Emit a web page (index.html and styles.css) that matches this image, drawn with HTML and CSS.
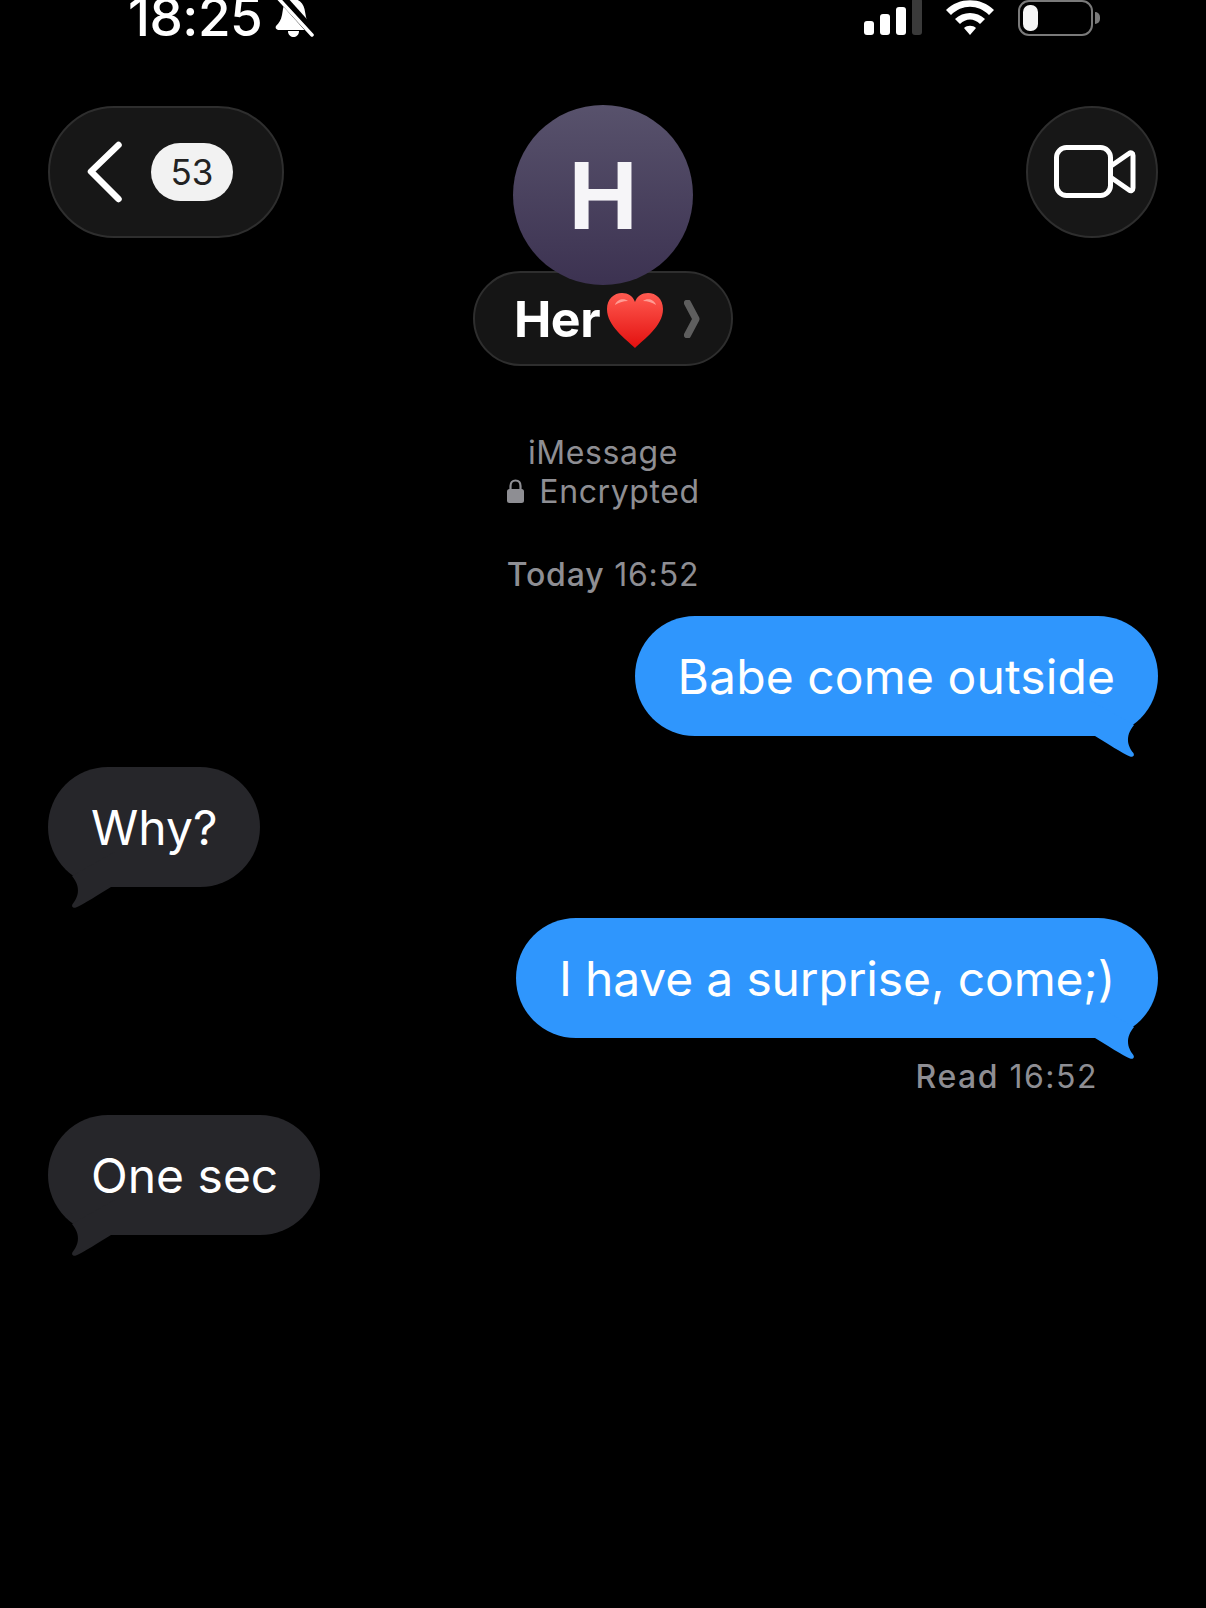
FILE: index.html
```html
<!DOCTYPE html>
<html lang="en">
<head>
    <meta charset="UTF-8">
    <meta name="viewport" content="width=device-width, initial-scale=1.0">
    <title>Messages</title>
    <link rel="stylesheet" href="styles.css">
</head>
<body>
    <svg class="defs" width="0" height="0">
        <symbol id="tail" viewBox="0 0 70 60">
            <path d="M0 36H5C18 44 32 53 40 56.500C43.500 57.500 45 55 43 52.500C38.500 47 34 37 44 25L0 0Z"/>
        </symbol>
    </svg>

    <div class="status-bar">
        <div class="status-left">
            <span class="time">18:25</span>
            <svg class="bell" width="40" height="40" viewBox="0 0 40 40">
                <path d="M19 1C25 1 29 5 30.500 11L32 19C33 24 36 26 38 29V32H6C2 32 1 30 2 28C5 25 7 22 8 17L9 11C10 5 13 1 19 1Z" fill="#fff"/>
                <path d="M14 33H25C25 37 22 39 19.500 39C17 39 14 37 14 33Z" fill="#fff"/>
                <path d="M6 -2L42 38" stroke="#000" stroke-width="9"/>
                <path d="M4 0L38 37" stroke="#fff" stroke-width="3.500" stroke-linecap="round"/>
            </svg>
        </div>
        <div class="status-right">
            <div class="signal">
                <span class="bar bar-1"></span>
                <span class="bar bar-2"></span>
                <span class="bar bar-3"></span>
                <span class="bar bar-4"></span>
            </div>
            <svg class="wifi" width="50" height="36" viewBox="0 0 50 36">
                <path d="M1 10C14 -3 36 -3 49 10L44 15C33 4 17 4 6 15Z" fill="#fff"/>
                <path d="M10 19C18 11 32 11 40 19L35 24C29 18 21 18 15 24Z" fill="#fff"/>
                <path d="M19 28C22 25 28 25 31 28L25 35Z" fill="#fff"/>
            </svg>
            <div class="battery">
                <div class="battery-body"><span class="battery-level"></span></div>
                <span class="battery-nub"></span>
            </div>
        </div>
    </div>

    <div class="header">
        <div class="glass-btn back-btn">
            <svg width="36" height="62" viewBox="0 0 36 62">
                <path d="M31.500 4L4 30.500L31.500 58" fill="none" stroke="#fff" stroke-width="6.500" stroke-linecap="round" stroke-linejoin="round"/>
            </svg>
            <span class="badge">53</span>
        </div>

        <div class="contact">
            <div class="avatar">H</div>
            <div class="name-pill">
                <span class="name">Her</span>
                <svg class="heart" width="58" height="58" viewBox="0 0 58 58">
                    <defs>
                        <linearGradient id="heartFill" x1="0" y1="0" x2="0" y2="1">
                            <stop offset="0" stop-color="#ff5a50"/>
                            <stop offset="1" stop-color="#e3100f"/>
                        </linearGradient>
                    </defs>
                    <path d="M29 56C20 47 1 34 1 17C1 7 8 1 16 1C22 1 27 4 29 10C31 4 36 1 42 1C50 1 57 7 57 17C57 34 38 47 29 56Z" fill="url(#heartFill)"/>
                    <path d="M9 13C11 7 18 6 22 9C17 9 12 11 9 13Z" fill="#ff9c94"/>
                    <path d="M37 9C41 6 48 7 50 13C47 11 42 9 37 9Z" fill="#ff9c94"/>
                </svg>
                <svg class="chevron" width="16" height="38" viewBox="0 0 16 38">
                    <path d="M3.500 3L12 19L3.500 35" fill="none" stroke="#5e5e5e" stroke-width="7" stroke-linecap="round" stroke-linejoin="round"/>
                </svg>
            </div>
        </div>

        <div class="glass-btn video-btn">
            <svg width="82" height="54" viewBox="0 0 82 54">
                <rect x="2.500" y="2.500" width="54" height="48" rx="10" fill="none" stroke="#fff" stroke-width="5"/>
                <path d="M57 21L75 8.500C77 7 79 8 79 10.500V43C79 45.500 77 46.500 75 45L57 32.500" fill="none" stroke="#fff" stroke-width="5" stroke-linejoin="round"/>
            </svg>
        </div>
    </div>

    <div class="service-info">
        <div>iMessage</div>
        <div class="encrypted">
            <svg width="19" height="25" viewBox="0 0 19 25">
                <path d="M4.500 11V7C4.500 3.500 6.500 1.500 9.500 1.500C12.500 1.500 14.500 3.500 14.500 7V11" fill="none" stroke="#8e8e93" stroke-width="2.200"/>
                <rect x="1" y="10" width="17" height="14" rx="2.500" fill="#8e8e93"/>
            </svg>
            <span>Encrypted</span>
        </div>
    </div>

    <div class="timestamp"><b>Today</b> 16:52</div>

    <div class="messages">
        <div class="bubble sent first">
            Babe come outside
            <svg class="tail"><use href="#tail"/></svg>
        </div>
        <div class="bubble received second">
            Why?
            <svg class="tail"><use href="#tail"/></svg>
        </div>
        <div class="bubble sent third">
            I have a surprise, come;)
            <svg class="tail"><use href="#tail"/></svg>
        </div>
        <div class="read-receipt"><b>Read</b> 16:52</div>
        <div class="bubble received last">
            One sec
            <svg class="tail"><use href="#tail"/></svg>
        </div>
    </div>
</body>
</html>
```

FILE: styles.css
```css
* {
    margin: 0;
    padding: 0;
    box-sizing: border-box;
}

html, body {
    height: 100%;
}

body {
    font-family: Inter, 'Liberation Sans', sans-serif;
    background: #000;
    color: #fff;
    overflow: hidden;
}

.defs {
    display: block;
}

.status-bar {
    height: 105px;
    padding: 0 106px 0 128px;
    display: flex;
    justify-content: space-between;
    align-items: flex-start;
    overflow: hidden;
}

.status-left {
    display: flex;
    align-items: flex-start;
    gap: 12px;
}

.time {
    margin-top: -1px;
    font-size: 53px;
    font-weight: 500;
    line-height: 36px;
    letter-spacing: -0.5px;
}

.bell {
    margin-top: -2px;
}

.status-right {
    display: flex;
    align-items: flex-start;
}

.signal {
    display: flex;
    align-items: flex-end;
    gap: 6px;
    height: 35px;
    margin-right: 23px;
}

.bar {
    width: 10px;
    background: #fff;
    border-radius: 3px;
}

.bar-1 { height: 14px; }
.bar-2 { height: 21px; }
.bar-3 { height: 28px; }
.bar-4 { height: 37px; background: #3a3a3a; }

.wifi {
    margin-right: 23px;
}

.battery {
    display: flex;
    align-items: center;
}

.battery-body {
    width: 75px;
    height: 36px;
    border: 2.500px solid #7a7a7a;
    border-radius: 11px;
    padding: 3px;
}

.battery-level {
    display: block;
    width: 15px;
    height: 100%;
    background: #f5f5f5;
    border-radius: 7px;
}

.battery-nub {
    width: 5px;
    height: 12px;
    margin-left: 2px;
    background: #7a7a7a;
    border-radius: 0 6px 6px 0;
}

.header {
    padding: 0 48px;
    display: grid;
    grid-template-columns: 1fr auto 1fr;
    align-items: start;
}

.glass-btn {
    height: 132px;
    margin-top: 1px;
    background: #171717;
    border: 2px solid #2e2e2e;
    border-radius: 66px;
    display: flex;
    align-items: center;
}

.back-btn {
    justify-self: start;
    width: 236px;
    padding-left: 37px;
    gap: 28px;
}

.badge {
    width: 82px;
    height: 58px;
    background: #f2f2f2;
    color: #222;
    border-radius: 29px;
    font-size: 35px;
    line-height: 58px;
    text-align: center;
}

.video-btn {
    justify-self: end;
    width: 132px;
    padding-left: 26px;
}

.contact {
    display: flex;
    flex-direction: column;
    align-items: center;
}

.avatar {
    position: relative;
    width: 180px;
    height: 180px;
    margin-bottom: -14px;
    border-radius: 50%;
    background: linear-gradient(180deg, #58526c 0%, #3c3251 100%);
    color: #f6f5f8;
    font-size: 92px;
    font-weight: 700;
    line-height: 182px;
    text-align: center;
}

.name-pill {
    width: 260px;
    height: 95px;
    padding-left: 39px;
    background: #151515;
    border: 2px solid #2e2e2e;
    border-radius: 48px;
    display: flex;
    align-items: center;
}

.name {
    font-size: 50px;
    font-weight: 700;
    letter-spacing: -0.5px;
}

.heart {
    margin-left: 6px;
    margin-top: 4px;
}

.chevron {
    margin-left: 20px;
}

.service-info {
    margin-top: 67px;
    color: #8e8e93;
    font-size: 32px;
    line-height: 39px;
    letter-spacing: 0.6px;
    text-align: center;
}

.encrypted {
    display: flex;
    justify-content: center;
    align-items: center;
    gap: 14px;
}

.timestamp {
    margin-top: 44px;
    color: #8e8e93;
    font-size: 32px;
    line-height: 39px;
    letter-spacing: 0.8px;
    text-align: center;
}

.timestamp b,
.read-receipt b {
    font-weight: 500;
}

.messages {
    padding: 0 48px;
    display: flex;
    flex-direction: column;
}

.bubble {
    position: relative;
    height: 120px;
    padding: 0 43px;
    border-radius: 60px;
    font-size: 48px;
    line-height: 122px;
    white-space: nowrap;
}

.tail {
    position: absolute;
    bottom: -24px;
    width: 70px;
    height: 60px;
}

.sent {
    align-self: flex-end;
    background: #2f96fd;
    fill: #2f96fd;
}

.sent .tail {
    right: -2px;
}

.received {
    align-self: flex-start;
    background: #26262a;
    fill: #26262a;
}

.received .tail {
    left: -2px;
    transform: scaleX(-1);
}

.first {
    margin-top: 22px;
    letter-spacing: 0.1px;
}

.second {
    margin-top: 31px;
    padding-right: 42px;
}

.third {
    margin-top: 31px;
    letter-spacing: -0.17px;
}

.read-receipt {
    align-self: flex-end;
    margin-top: 19px;
    margin-right: 60px;
    color: #8e8e93;
    font-size: 32px;
    line-height: 39px;
    letter-spacing: 1.500px;
}

.last {
    margin-top: 19px;
    padding-right: 42px;
}
```
